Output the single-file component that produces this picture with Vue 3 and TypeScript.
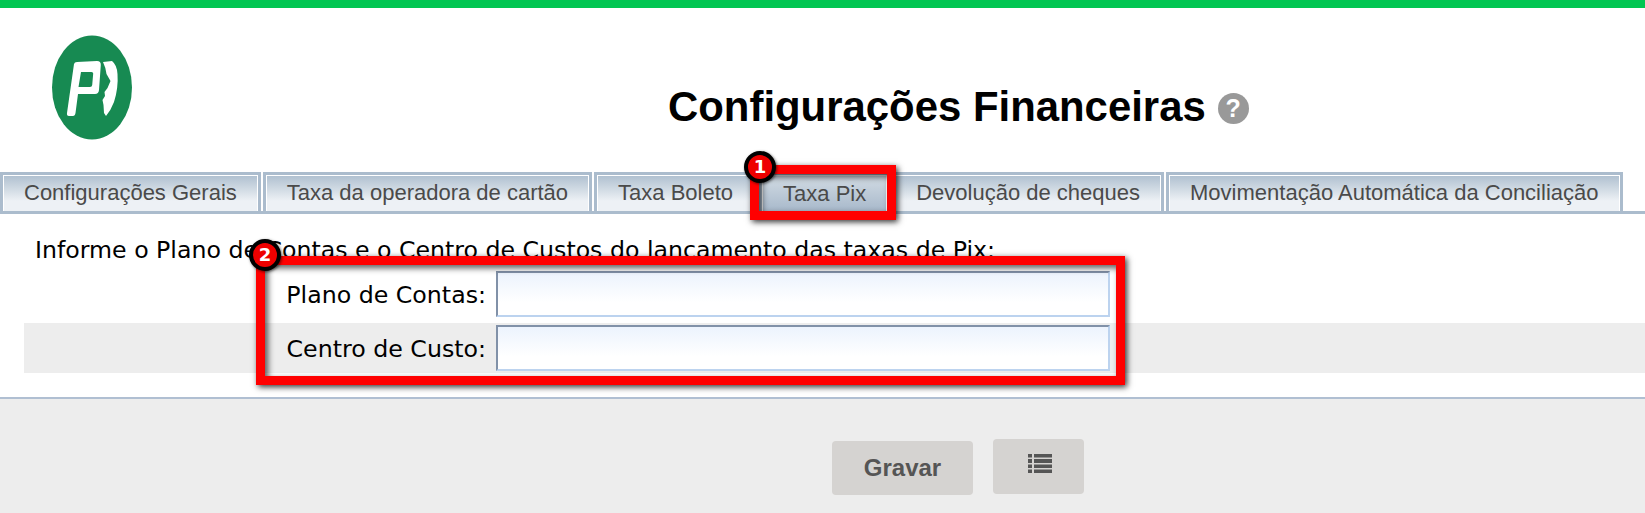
<script setup lang="ts">
const tabs = [
  'Configurações Gerais',
  'Taxa da operadora de cartão',
  'Taxa Boleto',
  'Taxa Pix',
  'Devolução de cheques',
  'Movimentação Automática da Conciliação'
];
const activeTab = 'Taxa Pix';
const fields = ['Plano de Contas:', 'Centro de Custo:'];
</script>

<template>
  <div class="page">
    <div class="top-bar"></div>

    <header class="header">
      <svg class="logo" viewBox="52 35 80 105" width="80" height="105">
        <ellipse cx="92" cy="87.5" rx="40" ry="52" fill="#178a52" />
        <path
          fill="#fff"
          fill-rule="evenodd"
          d="M74 64 Q74.500 62 77 62 L97 61 Q101 61 100.800 65 L99 90 Q98.700 94 95 94 L78 94 L75.500 113 Q75 116 73 116 L69 116 Q66.500 116 67 113 Z M81 72 L78.500 87 L90 87 Q92 87 92.200 85 L93.200 73.500 Q93.300 72 91.500 72 Z"
        />
        <path
          fill="#fff"
          d="M103 62 L112 61 Q117 65 117.500 74 Q118.500 88 114 102 Q111 110 106 116 L104 113 L103.500 105 L102.500 100 L105 96 L104.500 92 L107.500 88 L110.500 81 L106.500 74 Q105.500 67 103 62 Z"
        />
      </svg>
      <h1 class="title">Configurações Financeiras</h1>
      <span class="help">?</span>
    </header>

    <nav class="tabs">
      <div v-for="tab in tabs" :key="tab" class="tab" :class="{ active: tab === activeTab }">
        {{ tab }}
      </div>
    </nav>

    <main class="content">
      <p class="intro">Informe o Plano de Contas e o Centro de Custos do lançamento das taxas de Pix:</p>
      <div class="form">
        <div v-for="field in fields" :key="field" class="row">
          <label class="label">{{ field }}</label>
          <input class="field" type="text" />
        </div>
      </div>
    </main>

    <footer class="footer">
      <button class="btn save">Gravar</button>
      <button class="btn list">
        <svg width="24" height="19" viewBox="0 0 24 19" fill="#555">
          <path d="M0 0h4v3.500H0zM6 0h18v3.500H6zM0 5h4v4H0zM6 5h18v4H6zM0 10.500h4v3.500H0zM6 10.500h18v3.500H6zM0 15.500h4v3.500H0zM6 15.500h18v3.500H6z" />
        </svg>
      </button>
    </footer>

    <!-- marcações do tutorial -->
    <div class="mark mark-tab"></div>
    <div class="mark mark-form"></div>
    <span class="badge badge-tab">1</span>
    <span class="badge badge-form">2</span>
  </div>
</template>

<style>
html,
body {
  margin: 0;
  background: #fff;
}
</style>

<style scoped>
.page {
  position: relative;
  width: 1645px;
  height: 513px;
  display: flex;
  flex-direction: column;
  overflow: hidden;
  font-family: "Liberation Sans", Arial, sans-serif;
}

.top-bar {
  height: 8px;
  background: #02c652;
}

.header {
  height: 164px;
  display: flex;
  align-items: flex-start;
  padding-left: 52px;
  box-sizing: border-box;
}

.logo {
  margin-top: 27px;
  flex: none;
}

.title {
  margin: 74px 0 0 536px;
  font-size: 41.9px;
  line-height: 50px;
  font-weight: bold;
  color: #000;
  white-space: nowrap;
}

.help {
  width: 31px;
  height: 31px;
  margin: 85px 0 0 12px;
  border-radius: 50%;
  background: #999;
  color: #fff;
  font-size: 25px;
  font-weight: bold;
  line-height: 31px;
  text-align: center;
}

.tabs {
  height: 42px;
  display: flex;
  gap: 2px;
  border-bottom: 3px solid #abbccd;
  box-sizing: border-box;
}

.tab {
  height: 39px;
  box-sizing: border-box;
  padding: 0 21px;
  border: 3px solid #abbccd;
  border-bottom: 0;
  box-shadow: inset 1px 1px 0 #fff, inset -1px 0 0 #fff;
  background: linear-gradient(#aebfcf, #edf1f5 72%);
  color: #4a4a4a;
  font-size: 22px;
  line-height: 36px;
  white-space: nowrap;
}

.tab.active {
  background: linear-gradient(#d3dce4, #a8b9cb);
  line-height: 38px;
}

.content {
  height: 183px;
  box-sizing: border-box;
  padding: 21px 0 0 24px;
}

.intro {
  margin: 0 0 4px 11px;
  font-family: "DejaVu Sans", Tahoma, sans-serif;
  font-size: 23.65px;
  line-height: 30px;
  color: #000;
  white-space: nowrap;
}

.form {
  display: flex;
  flex-direction: column;
  gap: 4px;
}

.row {
  height: 50px;
  box-sizing: border-box;
  padding-top: 2px;
  display: flex;
  gap: 10px;
}

.row:nth-child(2) {
  background: #ededed;
}

.label {
  width: 462px;
  height: 46px;
  text-align: right;
  font-family: "DejaVu Sans", Tahoma, sans-serif;
  font-size: 23.7px;
  line-height: 48px;
  color: #000;
}

.field {
  width: 614px;
  height: 46px;
  box-sizing: border-box;
  border: 2px solid;
  border-color: #8191a8 #bcd3ef #bcd3ef #8191a8;
  background: linear-gradient(#ecf3fd, #fff 70%);
  outline: none;
}

.footer {
  flex: 1;
  display: flex;
  align-items: flex-start;
  gap: 20px;
  padding: 40px 0 0 832px;
  border-top: 2px solid #b0bfd2;
  background: #ededed;
}

.btn {
  border: 0;
  border-radius: 4px;
  background: #d5d3d1;
  color: #555;
  padding: 0;
  font-family: inherit;
}

.save {
  width: 141px;
  height: 54px;
  margin-top: 2px;
  font-size: 24px;
  font-weight: bold;
}

.list {
  width: 91px;
  height: 55px;
  padding: 0 0 6px 0;
}

.list svg {
  display: block;
  margin: 0 auto;
  position: relative;
  left: 1px;
}

.mark {
  position: absolute;
  box-sizing: border-box;
  border: 9px solid #f00;
  box-shadow: 2px 2px 6px rgba(0, 0, 0, 0.8), inset 3px 3px 6px rgba(0, 0, 0, 0.65);
}

.mark-tab {
  left: 750px;
  top: 165px;
  width: 146px;
  height: 55px;
}

.mark-form {
  left: 256px;
  top: 256px;
  width: 869px;
  height: 129px;
}

.badge {
  position: absolute;
  width: 32px;
  height: 32px;
  box-sizing: border-box;
  border: 4px solid #000;
  border-radius: 50%;
  background: #e00;
  color: #fff;
  font-family: "DejaVu Sans", sans-serif;
  font-size: 18px;
  font-weight: bold;
  line-height: 24px;
  text-align: center;
  box-shadow: 1px 1px 3px rgba(0, 0, 0, 0.6);
}

.badge-tab {
  left: 744px;
  top: 151px;
}

.badge-form {
  left: 249px;
  top: 239px;
}
</style>
